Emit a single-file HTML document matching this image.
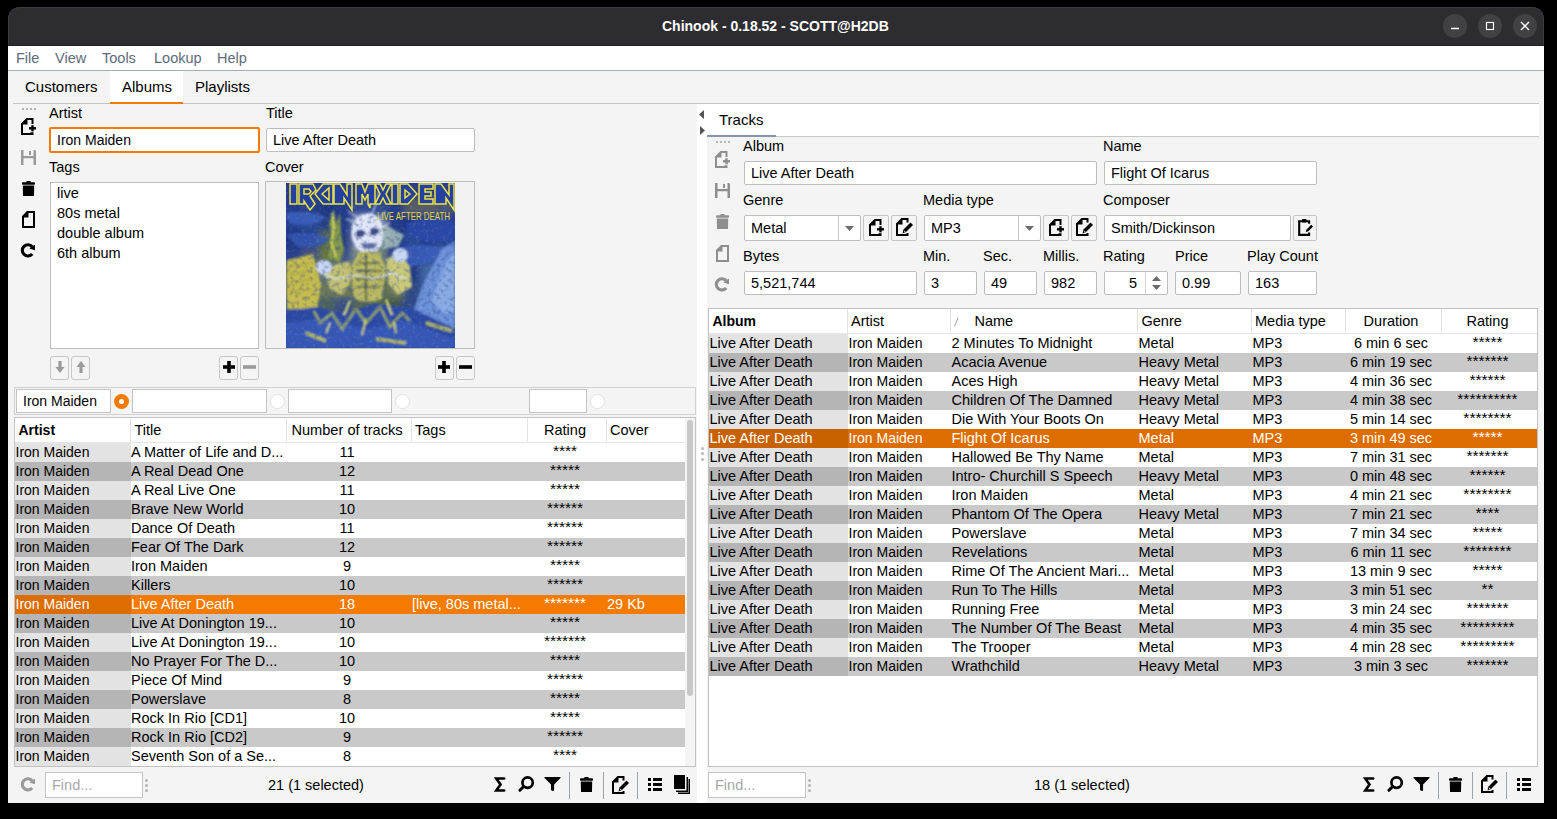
<!DOCTYPE html><html><head><meta charset="utf-8"><style>
html,body{margin:0;padding:0;width:1557px;height:819px;overflow:hidden;background:#000;font-family:"Liberation Sans", sans-serif;font-size:14px;color:#000}
*{box-sizing:border-box}
</style></head><body>
<div style="position:absolute;left:8px;top:40px;width:1536px;height:763px;background:#f4f4f4"></div>
<div style="position:absolute;left:8px;top:7px;width:1536px;height:39px;background:#2d2c31;border-radius:12px 12px 0 0;box-shadow:inset 0 0 0 1px #3c3c42"></div>
<div style="position:absolute;left:8px;top:45px;width:1536px;height:1px;background:#1f1f23"></div>
<div style="position:absolute;left:662px;top:16.15px;line-height:20px;font-size:14px;white-space:nowrap;color:#fff;font-weight:bold">Chinook - 0.18.52 - SCOTT@H2DB</div>
<div style="position:absolute;left:1443px;top:14px;width:24px;height:24px;background:#404045;border-radius:50%"></div>
<div style="position:absolute;left:1478px;top:14px;width:24px;height:24px;background:#404045;border-radius:50%"></div>
<div style="position:absolute;left:1513px;top:14px;width:24px;height:24px;background:#404045;border-radius:50%"></div>
<svg style="position:absolute;left:1440px;top:14px;overflow:visible" width="100" height="24" viewBox="0 0 100 24"><line x1="11" y1="14.5" x2="19" y2="14.5" stroke="#fff" stroke-width="1.5"/><rect x="46.5" y="8.5" width="7" height="7" fill="none" stroke="#fff" stroke-width="1.15"/><line x1="81" y1="8" x2="89" y2="16" stroke="#fff" stroke-width="1.4"/><line x1="89" y1="8" x2="81" y2="16" stroke="#fff" stroke-width="1.4"/></svg>
<div style="position:absolute;left:8px;top:46px;width:1536px;height:24px;background:#fff"></div>
<div style="position:absolute;left:8px;top:70px;width:1536px;height:1px;background:#a3adb8"></div>
<div style="position:absolute;left:16px;top:47.98px;line-height:20px;font-size:14.5px;white-space:nowrap;color:#5d6b7c">File</div>
<div style="position:absolute;left:55px;top:47.98px;line-height:20px;font-size:14.5px;white-space:nowrap;color:#5d6b7c">View</div>
<div style="position:absolute;left:102px;top:47.98px;line-height:20px;font-size:14.5px;white-space:nowrap;color:#5d6b7c">Tools</div>
<div style="position:absolute;left:154px;top:47.98px;line-height:20px;font-size:14.5px;white-space:nowrap;color:#5d6b7c">Lookup</div>
<div style="position:absolute;left:217px;top:47.98px;line-height:20px;font-size:14.5px;white-space:nowrap;color:#5d6b7c">Help</div>
<div style="position:absolute;left:110px;top:71px;width:73px;height:32px;background:#fff"></div>
<div style="position:absolute;left:13px;top:103px;width:1526px;height:1px;background:#c4c4c4"></div>
<div style="position:absolute;left:110px;top:102px;width:73px;height:2px;background:#f47a00"></div>
<div style="position:absolute;left:25px;top:76.80px;line-height:20px;font-size:15px;white-space:nowrap;">Customers</div>
<div style="position:absolute;left:122px;top:76.80px;line-height:20px;font-size:15px;white-space:nowrap;">Albums</div>
<div style="position:absolute;left:195px;top:76.80px;line-height:20px;font-size:15px;white-space:nowrap;">Playlists</div>
<div style="position:absolute;left:22px;top:108px;width:2px;height:2px;background:#b0b0b0"></div>
<div style="position:absolute;left:26px;top:108px;width:2px;height:2px;background:#b0b0b0"></div>
<div style="position:absolute;left:30px;top:108px;width:2px;height:2px;background:#b0b0b0"></div>
<div style="position:absolute;left:34px;top:108px;width:2px;height:2px;background:#b0b0b0"></div>
<svg style="position:absolute;left:21px;top:118px;overflow:visible" width="15" height="17" viewBox="0 0 15 17"><path fill="#000" d="M0,5.5 L5.5,0 H12.5 V6 H10.5 V2 H6.5 V6.5 H2 V15 H9.5 V14.2 H12.5 V17 H0 Z"/><rect x="10.3" y="7.2" width="2.4" height="6.2" fill="#000"/><rect x="8" y="9.1" width="7" height="2.4" fill="#000"/></svg>
<svg style="position:absolute;left:21px;top:150px;overflow:visible" width="15" height="15" viewBox="0 0 15 15"><path fill="#9a9a9a" d="M0,0 H2.5 V6 H12.5 V0 H14 L15,1 V15 H12.5 V8.2 H2.5 V15 H0 Z"/><rect x="8" y="1" width="2" height="4" fill="#9a9a9a"/></svg>
<svg style="position:absolute;left:22px;top:181px;overflow:visible" width="13" height="15" viewBox="0 0 13 15"><rect x="0" y="1.2" width="13" height="2.6" rx="0.8" fill="#000"/><rect x="4.2" y="0" width="4.6" height="2" rx="1" fill="#000"/><path fill="#000" d="M0.8,4.6 H12.2 L12,14.4 Q12,15 11.4,15 H1.6 Q1,15 1,14.4 Z"/></svg>
<svg style="position:absolute;left:22px;top:211px;overflow:visible" width="13" height="17" viewBox="0 0 13 17"><path fill="#000" fill-rule="evenodd" d="M0,5 L5,0 H13 V17 H0 Z M2,6.5 H6.5 V2 H11 V15 H2 Z"/></svg>
<svg style="position:absolute;left:21px;top:243px;overflow:visible" width="16" height="16" viewBox="0 0 16 16"><path fill="none" stroke="#000" stroke-width="3.1" d="M11.2,11.0 A5.6,5.6 0 1 1 11.2,3.8"/><path fill="#000" d="M8.3,5.4 L14,1.5 L14,7.3 Z"/></svg>
<div style="position:absolute;left:49px;top:102.98px;line-height:20px;font-size:14.5px;white-space:nowrap;">Artist</div>
<div style="position:absolute;left:49px;top:127px;width:211px;height:26px;background:#fff;border:2px solid #f47a00;border-radius:2px"></div>
<div style="position:absolute;left:57px;top:130.15px;line-height:20px;font-size:14px;white-space:nowrap;">Iron Maiden</div>
<div style="position:absolute;left:266px;top:102.98px;line-height:20px;font-size:14.5px;white-space:nowrap;">Title</div>
<div style="position:absolute;left:266px;top:128px;width:209px;height:24px;background:#fff;border:1px solid #bdbdbd;border-radius:2px"></div>
<div style="position:absolute;left:273px;top:129.98px;line-height:20px;font-size:14.5px;white-space:nowrap;">Live After Death</div>
<div style="position:absolute;left:49px;top:156.98px;line-height:20px;font-size:14.5px;white-space:nowrap;">Tags</div>
<div style="position:absolute;left:50px;top:182px;width:209px;height:167px;background:#fff;border:1px solid #bdbdbd;border-radius:0px"></div>
<div style="position:absolute;left:57px;top:182.98px;line-height:20px;font-size:14.5px;white-space:nowrap;">live</div>
<div style="position:absolute;left:57px;top:202.98px;line-height:20px;font-size:14.5px;white-space:nowrap;">80s metal</div>
<div style="position:absolute;left:57px;top:222.98px;line-height:20px;font-size:14.5px;white-space:nowrap;">double album</div>
<div style="position:absolute;left:57px;top:242.98px;line-height:20px;font-size:14.5px;white-space:nowrap;">6th album</div>
<div style="position:absolute;left:265px;top:156.98px;line-height:20px;font-size:14.5px;white-space:nowrap;">Cover</div>
<div style="position:absolute;left:265px;top:181px;width:210px;height:168px;background:#f2f2f2;border:1px solid #bdbdbd;border-radius:0px"></div>
<svg style="position:absolute;left:286px;top:183px" width="169" height="165" viewBox="0 0 169 165">
<defs>
<clipPath id="cc"><rect width="169" height="165"/></clipPath>
<filter id="bl" x="-10%" y="-10%" width="120%" height="120%"><feGaussianBlur stdDeviation="3"/></filter>
<filter id="bl2" x="-20%" y="-20%" width="140%" height="140%"><feGaussianBlur stdDeviation="1.0"/></filter>
<filter id="tx" x="0" y="0" width="100%" height="100%"><feTurbulence type="fractalNoise" baseFrequency="0.22" numOctaves="2" seed="3"/><feColorMatrix type="matrix" values="0 0 0 0 0.05  0 0 0 0 0.08  0 0 0 0 0.3  0 0 0 -2.0 1.05"/></filter>
<filter id="tx3" x="0" y="0" width="100%" height="100%"><feTurbulence type="fractalNoise" baseFrequency="0.3" numOctaves="2" seed="7"/><feColorMatrix type="matrix" values="0 0 0 0 0.9  0 0 0 0 0.95  0 0 0 0 1  0 0 0 2.6 -1.45"/></filter>
</defs>
<g clip-path="url(#cc)">
<rect width="169" height="165" fill="#22389a"/>
<g filter="url(#bl)"><rect x="-1.0" y="-1.0" width="18.9" height="18.5" fill="#2f3c76"/><rect x="15.9" y="-1.0" width="18.9" height="18.5" fill="#2f3c7c"/><rect x="32.8" y="-1.0" width="18.9" height="18.5" fill="#253783"/><rect x="49.7" y="-1.0" width="18.9" height="18.5" fill="#2f3c7c"/><rect x="66.6" y="-1.0" width="18.9" height="18.5" fill="#253783"/><rect x="83.5" y="-1.0" width="18.9" height="18.5" fill="#2f3c76"/><rect x="100.4" y="-1.0" width="18.9" height="18.5" fill="#2f3c7c"/><rect x="117.3" y="-1.0" width="18.9" height="18.5" fill="#2f3c7c"/><rect x="134.2" y="-1.0" width="18.9" height="18.5" fill="#2f3c7c"/><rect x="151.1" y="-1.0" width="18.9" height="18.5" fill="#2f3c7c"/><rect x="-1.0" y="15.5" width="18.9" height="18.5" fill="#203b89"/><rect x="15.9" y="15.5" width="18.9" height="18.5" fill="#274189"/><rect x="32.8" y="15.5" width="18.9" height="18.5" fill="#1a3483"/><rect x="49.7" y="15.5" width="18.9" height="18.5" fill="#223b89"/><rect x="66.6" y="15.5" width="18.9" height="18.5" fill="#2d4896"/><rect x="83.5" y="15.5" width="18.9" height="18.5" fill="#2d4890"/><rect x="100.4" y="15.5" width="18.9" height="18.5" fill="#203b89"/><rect x="117.3" y="15.5" width="18.9" height="18.5" fill="#565b62"/><rect x="134.2" y="15.5" width="18.9" height="18.5" fill="#565b62"/><rect x="151.1" y="15.5" width="18.9" height="18.5" fill="#49556f"/><rect x="-1.0" y="32.0" width="18.9" height="18.5" fill="#204190"/><rect x="15.9" y="32.0" width="18.9" height="18.5" fill="#274896"/><rect x="32.8" y="32.0" width="18.9" height="18.5" fill="#274183"/><rect x="49.7" y="32.0" width="18.9" height="18.5" fill="#223c89"/><rect x="66.6" y="32.0" width="18.9" height="18.5" fill="#8396be"/><rect x="83.5" y="32.0" width="18.9" height="18.5" fill="#7689b1"/><rect x="100.4" y="32.0" width="18.9" height="18.5" fill="#223b89"/><rect x="117.3" y="32.0" width="18.9" height="18.5" fill="#1a3483"/><rect x="134.2" y="32.0" width="18.9" height="18.5" fill="#203b89"/><rect x="151.1" y="32.0" width="18.9" height="18.5" fill="#223b89"/><rect x="-1.0" y="48.5" width="18.9" height="18.5" fill="#1a3483"/><rect x="15.9" y="48.5" width="18.9" height="18.5" fill="#203b89"/><rect x="32.8" y="48.5" width="18.9" height="18.5" fill="#5b6f41"/><rect x="49.7" y="48.5" width="18.9" height="18.5" fill="#274183"/><rect x="66.6" y="48.5" width="18.9" height="18.5" fill="#96a4be"/><rect x="83.5" y="48.5" width="18.9" height="18.5" fill="#627c83"/><rect x="100.4" y="48.5" width="18.9" height="18.5" fill="#1a3483"/><rect x="117.3" y="48.5" width="18.9" height="18.5" fill="#274896"/><rect x="134.2" y="48.5" width="18.9" height="18.5" fill="#224190"/><rect x="151.1" y="48.5" width="18.9" height="18.5" fill="#204190"/><rect x="-1.0" y="65.0" width="18.9" height="18.5" fill="#274189"/><rect x="15.9" y="65.0" width="18.9" height="18.5" fill="#49557c"/><rect x="32.8" y="65.0" width="18.9" height="18.5" fill="#647641"/><rect x="49.7" y="65.0" width="18.9" height="18.5" fill="#3c5589"/><rect x="66.6" y="65.0" width="18.9" height="18.5" fill="#899683"/><rect x="83.5" y="65.0" width="18.9" height="18.5" fill="#768976"/><rect x="100.4" y="65.0" width="18.9" height="18.5" fill="#203b83"/><rect x="117.3" y="65.0" width="18.9" height="18.5" fill="#203b89"/><rect x="134.2" y="65.0" width="18.9" height="18.5" fill="#2f4e9d"/><rect x="151.1" y="65.0" width="18.9" height="18.5" fill="#4e6faa"/><rect x="-1.0" y="81.5" width="18.9" height="18.5" fill="#96903b"/><rect x="15.9" y="81.5" width="18.9" height="18.5" fill="#898341"/><rect x="32.8" y="81.5" width="18.9" height="18.5" fill="#556f83"/><rect x="49.7" y="81.5" width="18.9" height="18.5" fill="#83834e"/><rect x="66.6" y="81.5" width="18.9" height="18.5" fill="#5b6f76"/><rect x="83.5" y="81.5" width="18.9" height="18.5" fill="#5b6f5b"/><rect x="100.4" y="81.5" width="18.9" height="18.5" fill="#7c8962"/><rect x="117.3" y="81.5" width="18.9" height="18.5" fill="#223b83"/><rect x="134.2" y="81.5" width="18.9" height="18.5" fill="#4168a4"/><rect x="151.1" y="81.5" width="18.9" height="18.5" fill="#5576aa"/><rect x="-1.0" y="98.0" width="18.9" height="18.5" fill="#90893b"/><rect x="15.9" y="98.0" width="18.9" height="18.5" fill="#7c834e"/><rect x="32.8" y="98.0" width="18.9" height="18.5" fill="#68765b"/><rect x="49.7" y="98.0" width="18.9" height="18.5" fill="#717e4e"/><rect x="66.6" y="98.0" width="18.9" height="18.5" fill="#496276"/><rect x="83.5" y="98.0" width="18.9" height="18.5" fill="#4e6248"/><rect x="100.4" y="98.0" width="18.9" height="18.5" fill="#717e55"/><rect x="117.3" y="98.0" width="18.9" height="18.5" fill="#2f4883"/><rect x="134.2" y="98.0" width="18.9" height="18.5" fill="#345b9d"/><rect x="151.1" y="98.0" width="18.9" height="18.5" fill="#4e6faa"/><rect x="-1.0" y="114.5" width="18.9" height="18.5" fill="#415b89"/><rect x="15.9" y="114.5" width="18.9" height="18.5" fill="#4e6276"/><rect x="32.8" y="114.5" width="18.9" height="18.5" fill="#4e625b"/><rect x="49.7" y="114.5" width="18.9" height="18.5" fill="#344e83"/><rect x="66.6" y="114.5" width="18.9" height="18.5" fill="#56684e"/><rect x="83.5" y="114.5" width="18.9" height="18.5" fill="#5b6f41"/><rect x="100.4" y="114.5" width="18.9" height="18.5" fill="#41554e"/><rect x="117.3" y="114.5" width="18.9" height="18.5" fill="#2d4889"/><rect x="134.2" y="114.5" width="18.9" height="18.5" fill="#2f559d"/><rect x="151.1" y="114.5" width="18.9" height="18.5" fill="#4168a4"/><rect x="-1.0" y="131.0" width="18.9" height="18.5" fill="#274e90"/><rect x="15.9" y="131.0" width="18.9" height="18.5" fill="#3c5b83"/><rect x="32.8" y="131.0" width="18.9" height="18.5" fill="#5b6f4e"/><rect x="49.7" y="131.0" width="18.9" height="18.5" fill="#2d4890"/><rect x="66.6" y="131.0" width="18.9" height="18.5" fill="#415b83"/><rect x="83.5" y="131.0" width="18.9" height="18.5" fill="#344876"/><rect x="100.4" y="131.0" width="18.9" height="18.5" fill="#4e644e"/><rect x="117.3" y="131.0" width="18.9" height="18.5" fill="#274189"/><rect x="134.2" y="131.0" width="18.9" height="18.5" fill="#767141"/><rect x="151.1" y="131.0" width="18.9" height="18.5" fill="#64684e"/><rect x="-1.0" y="147.5" width="18.9" height="18.5" fill="#274890"/><rect x="15.9" y="147.5" width="18.9" height="18.5" fill="#274189"/><rect x="32.8" y="147.5" width="18.9" height="18.5" fill="#4e5b68"/><rect x="49.7" y="147.5" width="18.9" height="18.5" fill="#274189"/><rect x="66.6" y="147.5" width="18.9" height="18.5" fill="#4e6268"/><rect x="83.5" y="147.5" width="18.9" height="18.5" fill="#2d4889"/><rect x="100.4" y="147.5" width="18.9" height="18.5" fill="#274189"/><rect x="117.3" y="147.5" width="18.9" height="18.5" fill="#274189"/><rect x="134.2" y="147.5" width="18.9" height="18.5" fill="#274189"/><rect x="151.1" y="147.5" width="18.9" height="18.5" fill="#2d4890"/></g>
<g filter="url(#bl2)">
<path d="M0,30 Q20,26 40,34 Q30,44 10,42 Q0,40 0,30 Z" fill="#3c62c0" opacity="0.8"/>
<path d="M0,52 Q25,46 45,56 Q35,66 12,64 Z" fill="#3458b8" opacity="0.8"/>
<path d="M120,40 Q150,30 169,38 V58 Q145,62 122,52 Z" fill="#2a4aac" opacity="0.8"/>
<path d="M108,66 Q135,58 160,66 Q150,82 120,84 Z" fill="#3a62c4" opacity="0.7"/>
<path d="M169,58 L156,66 L146,84 L136,104 L128,126 L140,140 L169,150 Z" fill="#6a90d8"/>
<path d="M169,70 L160,80 L152,100 L146,118 L158,130 L169,128 Z" fill="#88aae4"/>
<path d="M1,77 L27,71 L35,102 L31,126 L1,126 Z" fill="#c4bc4c"/>
<path d="M4,84 L24,80 M4,92 L26,88 M4,100 L28,96 M4,108 L26,106" stroke="#9a9440" stroke-width="0.8" fill="none"/>
<path d="M42,74 L46,56 L43,40 L48,26 L50,40 L54,30 L55,52 L58,66 L54,80 Z" fill="#8aa040" opacity="0.9"/>
<path d="M46,30 L48,46 L45,60 L50,74" stroke="#e8e860" stroke-width="1.6" fill="none"/>
<path d="M66,44 Q70,30 84,30 Q96,34 98,46 Q100,62 88,70 Q76,72 70,64 Q64,56 66,44 Z" fill="#dfe6f8"/>
<path d="M96,40 L118,52 L112,64 L96,66 Z" fill="#a8c0b8" opacity="0.85"/>
<path d="M70,48 Q76,44 80,50 Q76,56 70,54 Z M84,46 Q90,42 94,48 Q90,54 84,52 Z" fill="#3a4a88"/>
<path d="M74,60 H92 L88,66 H78 Z" fill="#6070a8"/>
<path d="M72,70 Q82,66 94,70 L100,86 L96,116 Q82,122 68,116 L64,86 Z" fill="#b8b860"/>
<path d="M72,80 H94 M70,88 H96 M70,96 H96 M70,104 H94" stroke="#4a5a40" stroke-width="1.6" fill="none"/><path d="M80,70 V118" stroke="#4a5a40" stroke-width="2" fill="none"/>
<path d="M64,78 L48,82 L38,90 L44,106 L56,112 L64,100 Z" fill="#c0c070"/>
<path d="M100,76 L114,70 L124,84 L126,104 L112,112 L102,100 Z" fill="#c8c878"/>
<ellipse cx="38" cy="84" rx="8" ry="7" fill="#c8d8f4"/>
<ellipse cx="114" cy="72" rx="8" ry="7" fill="#c8d8f4"/>
<path d="M34,90 L50,96 L70,92 L88,96 L106,90 L120,96" stroke="#e8f0ff" stroke-width="1.2" fill="none"/>
<path d="M60,36 L72,40 M100,28 L90,38 M104,40 L94,44 M62,28 L74,36" stroke="#f0f4ff" stroke-width="1" fill="none"/>
<path d="M95,2 L90,22 L84,34" stroke="#c8d8ff" stroke-width="1.2" fill="none"/>
<path d="M0,128 L30,124 L60,130 L90,120 L128,126 L169,146 V165 H0 Z" fill="#2a4aa4"/><path d="M0,140 L40,136 L80,146 L120,138 L169,156 V165 H0 Z" fill="#3a5cbc" opacity="0.8"/>
<path d="M28,128 L34,140 L46,130 L56,146 L70,126 L80,140 L94,124 L104,144 L116,130 L124,138" stroke="#a8b848" stroke-width="2.4" fill="none" opacity="0.85"/><path d="M40,150 L44,140 M76,152 L80,136 M110,150 L108,138" stroke="#e0e070" stroke-width="1.6" fill="none"/>
<path d="M20,150 L40,158 M90,156 L120,160 M140,140 L166,148" stroke="#b8c048" stroke-width="3" fill="none"/>
<path d="M64,118 L58,132 M100,116 L106,132" stroke="#e8e870" stroke-width="2" fill="none"/>
</g>
<rect width="169" height="165" filter="url(#tx)" opacity="0.6"/>
<rect width="169" height="165" filter="url(#tx3)" opacity="0.15"/>
<path d="M4,1 H11 V21 H4 Z M13,1 H27 L30,7 L24,13 L29,21 L24,27 L18,18 V21 H13 Z M18,6 V11 H23 L25,8.5 L23,6 Z M29,11 L37,1 H47 L47,21 H37 Z M36,11 L43,5 V17 Z M48,1 H54 L61,12 V1 H66 V21 L66,27 L58,15 V21 H48 Z M70,1 H76 L79,9 L82,1 H89 V21 H84 V25 L82,21 V11 L79,17 L76,11 V21 H70 Z M89,1 H94 L97,7 L100,1 H105 L100,11 L105,21 H100 L97,15 L94,21 H89 L94,11 Z M106,1 H112 V21 H106 Z M114,1 H122 L131,11 L122,21 H114 Z M119,7 V15 L124,11 Z M133,1 H147 V6 H139 V9 H145 V13 H139 V16 H147 V21 H133 Z M149,1 H155 L163,12 V1 H168 V27 L160,15 V21 H149 Z" fill="#2440a0" fill-rule="evenodd" stroke="#e8e24a" stroke-width="1.5"/>
<text x="91" y="37" font-family="Liberation Sans" font-size="11" fill="#e0d840" textLength="73" lengthAdjust="spacingAndGlyphs">LIVE AFTER DEATH</text>
</g>
</svg>
<div style="position:absolute;left:50px;top:356px;width:19px;height:24px;background:#f4f4f4;border:1px solid #c8c8c8;border-radius:3px"></div>
<div style="position:absolute;left:71px;top:356px;width:19px;height:24px;background:#f4f4f4;border:1px solid #c8c8c8;border-radius:3px"></div>
<div style="position:absolute;left:219px;top:356px;width:19px;height:24px;background:#f4f4f4;border:1px solid #c8c8c8;border-radius:3px"></div>
<div style="position:absolute;left:240px;top:356px;width:19px;height:24px;background:#f4f4f4;border:1px solid #c8c8c8;border-radius:3px"></div>
<div style="position:absolute;left:435px;top:356px;width:19px;height:24px;background:#f4f4f4;border:1px solid #c8c8c8;border-radius:3px"></div>
<div style="position:absolute;left:456px;top:356px;width:19px;height:24px;background:#f4f4f4;border:1px solid #c8c8c8;border-radius:3px"></div>
<svg style="position:absolute;left:53.5px;top:361px;overflow:visible" width="12" height="13" viewBox="0 0 12 13"><path fill="#9a9a9a" d="M4.4,0 H7.6 V6 H10.5 L6,12 L1.5,6 H4.4 Z"/></svg>
<svg style="position:absolute;left:74.5px;top:361px;overflow:visible" width="12" height="13" viewBox="0 0 12 13"><path fill="#9a9a9a" d="M4.4,12 H7.6 V6 H10.5 L6,0 L1.5,6 H4.4 Z"/></svg>
<svg style="position:absolute;left:222.5px;top:361px;overflow:visible" width="12" height="12" viewBox="0 0 12 12"><rect x="4.2" y="0" width="3.6" height="12" fill="#000"/><rect x="0" y="4.2" width="12" height="3.6" fill="#000"/></svg>
<svg style="position:absolute;left:243.0px;top:361px;overflow:visible" width="13" height="12" viewBox="0 0 13 12"><rect x="0" y="4.2" width="13" height="3.6" fill="#9a9a9a"/></svg>
<svg style="position:absolute;left:438px;top:361px;overflow:visible" width="12" height="12" viewBox="0 0 12 12"><rect x="4.2" y="0" width="3.6" height="12" fill="#000"/><rect x="0" y="4.2" width="12" height="3.6" fill="#000"/></svg>
<svg style="position:absolute;left:459.0px;top:361px;overflow:visible" width="13" height="12" viewBox="0 0 13 12"><rect x="0" y="4.2" width="13" height="3.6" fill="#000"/></svg>
<div style="position:absolute;left:14px;top:387px;width:682px;height:28px;border:1px solid #d0d0d0;background:#f4f4f4"></div>
<div style="position:absolute;left:16px;top:389px;width:95px;height:24px;background:#fff;border:1px solid #c4c4c4;border-radius:0px"></div>
<div style="position:absolute;left:23px;top:391.15px;line-height:20px;font-size:14px;white-space:nowrap;">Iron Maiden</div>
<div style="position:absolute;left:114px;top:394px;width:15px;height:15px;background:#f47a00;border-radius:50%"></div>
<div style="position:absolute;left:119px;top:399px;width:5px;height:5px;background:#fff;border-radius:50%"></div>
<div style="position:absolute;left:132px;top:389px;width:135px;height:24px;background:#fff;border:1px solid #c4c4c4;border-radius:0px"></div>
<div style="position:absolute;left:270.0px;top:394px;width:15px;height:15px;background:#fff;border:1px solid #e2e2e2;border-radius:50%"></div>
<div style="position:absolute;left:395.0px;top:394px;width:15px;height:15px;background:#fff;border:1px solid #e2e2e2;border-radius:50%"></div>
<div style="position:absolute;left:590.0px;top:394px;width:15px;height:15px;background:#fff;border:1px solid #e2e2e2;border-radius:50%"></div>
<div style="position:absolute;left:288px;top:389px;width:104px;height:24px;background:#fff;border:1px solid #c4c4c4;border-radius:0px"></div>
<div style="position:absolute;left:529px;top:389px;width:58px;height:24px;background:#fff;border:1px solid #c4c4c4;border-radius:0px"></div>
<div style="position:absolute;left:14px;top:417px;width:682px;height:350px;border:1px solid #c2c2c2;background:#f4f4f4"></div>
<div style="position:absolute;left:15px;top:418px;width:670px;height:24px;background:#fff"></div>
<div style="position:absolute;left:15px;top:442px;width:670px;height:1px;background:#e6e6e6"></div>
<div style="position:absolute;left:130px;top:418px;width:1px;height:24px;background:#e3e3e3"></div>
<div style="position:absolute;left:286px;top:418px;width:1px;height:24px;background:#e3e3e3"></div>
<div style="position:absolute;left:411px;top:418px;width:1px;height:24px;background:#e3e3e3"></div>
<div style="position:absolute;left:527px;top:418px;width:1px;height:24px;background:#e3e3e3"></div>
<div style="position:absolute;left:606px;top:418px;width:1px;height:24px;background:#e3e3e3"></div>
<div style="position:absolute;left:18.5px;top:420.15px;line-height:20px;font-size:14px;white-space:nowrap;font-weight:bold">Artist</div>
<div style="position:absolute;left:134.5px;top:419.98px;line-height:20px;font-size:14.5px;white-space:nowrap;">Title</div>
<div style="position:absolute;left:197.0px;width:300px;text-align:center;top:419.94px;line-height:20px;font-size:14.6px;white-space:nowrap;">Number of tracks</div>
<div style="position:absolute;left:415px;top:419.98px;line-height:20px;font-size:14.5px;white-space:nowrap;">Tags</div>
<div style="position:absolute;left:415.0px;width:300px;text-align:center;top:419.98px;line-height:20px;font-size:14.5px;white-space:nowrap;">Rating</div>
<div style="position:absolute;left:610px;top:419.98px;line-height:20px;font-size:14.5px;white-space:nowrap;">Cover</div>
<div style="position:absolute;left:685px;top:418px;width:10px;height:348px;background:#f4f4f4"></div>
<div style="position:absolute;left:687px;top:420px;width:6px;height:276px;background:#c8c8c8;border-radius:3px"></div>
<div style="position:absolute;left:15px;top:443px;width:670px;height:19px;background:#ffffff"></div>
<div style="position:absolute;left:15px;top:443px;width:116px;height:19px;background:#e3e3e3"></div>
<div style="position:absolute;left:15.5px;top:442.15px;line-height:20px;font-size:14px;white-space:nowrap;color:#000">Iron Maiden</div>
<div style="position:absolute;left:131px;top:441.98px;line-height:20px;font-size:14.5px;white-space:nowrap;color:#000">A Matter of Life and D...</div>
<div style="position:absolute;left:197.0px;width:300px;text-align:center;top:441.98px;line-height:20px;font-size:14.5px;white-space:nowrap;color:#000">11</div>
<div style="position:absolute;left:415.0px;width:300px;text-align:center;top:440.63px;line-height:20px;font-size:15.5px;white-space:nowrap;color:#000">****</div>
<div style="position:absolute;left:15px;top:462px;width:670px;height:19px;background:#c9c9c9"></div>
<div style="position:absolute;left:15px;top:462px;width:116px;height:19px;background:#b5b5b5"></div>
<div style="position:absolute;left:15.5px;top:461.15px;line-height:20px;font-size:14px;white-space:nowrap;color:#000">Iron Maiden</div>
<div style="position:absolute;left:131px;top:460.98px;line-height:20px;font-size:14.5px;white-space:nowrap;color:#000">A Real Dead One</div>
<div style="position:absolute;left:197.0px;width:300px;text-align:center;top:460.98px;line-height:20px;font-size:14.5px;white-space:nowrap;color:#000">12</div>
<div style="position:absolute;left:415.0px;width:300px;text-align:center;top:459.63px;line-height:20px;font-size:15.5px;white-space:nowrap;color:#000">*****</div>
<div style="position:absolute;left:15px;top:481px;width:670px;height:19px;background:#ffffff"></div>
<div style="position:absolute;left:15px;top:481px;width:116px;height:19px;background:#e3e3e3"></div>
<div style="position:absolute;left:15.5px;top:480.15px;line-height:20px;font-size:14px;white-space:nowrap;color:#000">Iron Maiden</div>
<div style="position:absolute;left:131px;top:479.98px;line-height:20px;font-size:14.5px;white-space:nowrap;color:#000">A Real Live One</div>
<div style="position:absolute;left:197.0px;width:300px;text-align:center;top:479.98px;line-height:20px;font-size:14.5px;white-space:nowrap;color:#000">11</div>
<div style="position:absolute;left:415.0px;width:300px;text-align:center;top:478.63px;line-height:20px;font-size:15.5px;white-space:nowrap;color:#000">*****</div>
<div style="position:absolute;left:15px;top:500px;width:670px;height:19px;background:#c9c9c9"></div>
<div style="position:absolute;left:15px;top:500px;width:116px;height:19px;background:#b5b5b5"></div>
<div style="position:absolute;left:15.5px;top:499.15px;line-height:20px;font-size:14px;white-space:nowrap;color:#000">Iron Maiden</div>
<div style="position:absolute;left:131px;top:498.98px;line-height:20px;font-size:14.5px;white-space:nowrap;color:#000">Brave New World</div>
<div style="position:absolute;left:197.0px;width:300px;text-align:center;top:498.98px;line-height:20px;font-size:14.5px;white-space:nowrap;color:#000">10</div>
<div style="position:absolute;left:415.0px;width:300px;text-align:center;top:497.63px;line-height:20px;font-size:15.5px;white-space:nowrap;color:#000">******</div>
<div style="position:absolute;left:15px;top:519px;width:670px;height:19px;background:#ffffff"></div>
<div style="position:absolute;left:15px;top:519px;width:116px;height:19px;background:#e3e3e3"></div>
<div style="position:absolute;left:15.5px;top:518.15px;line-height:20px;font-size:14px;white-space:nowrap;color:#000">Iron Maiden</div>
<div style="position:absolute;left:131px;top:517.98px;line-height:20px;font-size:14.5px;white-space:nowrap;color:#000">Dance Of Death</div>
<div style="position:absolute;left:197.0px;width:300px;text-align:center;top:517.98px;line-height:20px;font-size:14.5px;white-space:nowrap;color:#000">11</div>
<div style="position:absolute;left:415.0px;width:300px;text-align:center;top:516.63px;line-height:20px;font-size:15.5px;white-space:nowrap;color:#000">******</div>
<div style="position:absolute;left:15px;top:538px;width:670px;height:19px;background:#c9c9c9"></div>
<div style="position:absolute;left:15px;top:538px;width:116px;height:19px;background:#b5b5b5"></div>
<div style="position:absolute;left:15.5px;top:537.15px;line-height:20px;font-size:14px;white-space:nowrap;color:#000">Iron Maiden</div>
<div style="position:absolute;left:131px;top:536.98px;line-height:20px;font-size:14.5px;white-space:nowrap;color:#000">Fear Of The Dark</div>
<div style="position:absolute;left:197.0px;width:300px;text-align:center;top:536.98px;line-height:20px;font-size:14.5px;white-space:nowrap;color:#000">12</div>
<div style="position:absolute;left:415.0px;width:300px;text-align:center;top:535.63px;line-height:20px;font-size:15.5px;white-space:nowrap;color:#000">******</div>
<div style="position:absolute;left:15px;top:557px;width:670px;height:19px;background:#ffffff"></div>
<div style="position:absolute;left:15px;top:557px;width:116px;height:19px;background:#e3e3e3"></div>
<div style="position:absolute;left:15.5px;top:556.15px;line-height:20px;font-size:14px;white-space:nowrap;color:#000">Iron Maiden</div>
<div style="position:absolute;left:131px;top:555.98px;line-height:20px;font-size:14.5px;white-space:nowrap;color:#000">Iron Maiden</div>
<div style="position:absolute;left:197.0px;width:300px;text-align:center;top:555.98px;line-height:20px;font-size:14.5px;white-space:nowrap;color:#000">9</div>
<div style="position:absolute;left:415.0px;width:300px;text-align:center;top:554.63px;line-height:20px;font-size:15.5px;white-space:nowrap;color:#000">*****</div>
<div style="position:absolute;left:15px;top:576px;width:670px;height:19px;background:#c9c9c9"></div>
<div style="position:absolute;left:15px;top:576px;width:116px;height:19px;background:#b5b5b5"></div>
<div style="position:absolute;left:15.5px;top:575.15px;line-height:20px;font-size:14px;white-space:nowrap;color:#000">Iron Maiden</div>
<div style="position:absolute;left:131px;top:574.98px;line-height:20px;font-size:14.5px;white-space:nowrap;color:#000">Killers</div>
<div style="position:absolute;left:197.0px;width:300px;text-align:center;top:574.98px;line-height:20px;font-size:14.5px;white-space:nowrap;color:#000">10</div>
<div style="position:absolute;left:415.0px;width:300px;text-align:center;top:573.63px;line-height:20px;font-size:15.5px;white-space:nowrap;color:#000">******</div>
<div style="position:absolute;left:15px;top:595px;width:670px;height:19px;background:#f47a00"></div>
<div style="position:absolute;left:15px;top:595px;width:116px;height:19px;background:#dc6d00"></div>
<div style="position:absolute;left:15.5px;top:594.15px;line-height:20px;font-size:14px;white-space:nowrap;color:#fff">Iron Maiden</div>
<div style="position:absolute;left:131px;top:593.98px;line-height:20px;font-size:14.5px;white-space:nowrap;color:#fff">Live After Death</div>
<div style="position:absolute;left:197.0px;width:300px;text-align:center;top:593.98px;line-height:20px;font-size:14.5px;white-space:nowrap;color:#fff">18</div>
<div style="position:absolute;left:415.0px;width:300px;text-align:center;top:592.63px;line-height:20px;font-size:15.5px;white-space:nowrap;color:#fff">*******</div>
<div style="position:absolute;left:412px;top:593.98px;line-height:20px;font-size:14.5px;white-space:nowrap;color:#fff">[live, 80s metal...</div>
<div style="position:absolute;left:607px;top:593.98px;line-height:20px;font-size:14.5px;white-space:nowrap;color:#fff">29 Kb</div>
<div style="position:absolute;left:15px;top:614px;width:670px;height:19px;background:#c9c9c9"></div>
<div style="position:absolute;left:15px;top:614px;width:116px;height:19px;background:#b5b5b5"></div>
<div style="position:absolute;left:15.5px;top:613.15px;line-height:20px;font-size:14px;white-space:nowrap;color:#000">Iron Maiden</div>
<div style="position:absolute;left:131px;top:612.98px;line-height:20px;font-size:14.5px;white-space:nowrap;color:#000">Live At Donington 19...</div>
<div style="position:absolute;left:197.0px;width:300px;text-align:center;top:612.98px;line-height:20px;font-size:14.5px;white-space:nowrap;color:#000">10</div>
<div style="position:absolute;left:415.0px;width:300px;text-align:center;top:611.63px;line-height:20px;font-size:15.5px;white-space:nowrap;color:#000">*****</div>
<div style="position:absolute;left:15px;top:633px;width:670px;height:19px;background:#ffffff"></div>
<div style="position:absolute;left:15px;top:633px;width:116px;height:19px;background:#e3e3e3"></div>
<div style="position:absolute;left:15.5px;top:632.15px;line-height:20px;font-size:14px;white-space:nowrap;color:#000">Iron Maiden</div>
<div style="position:absolute;left:131px;top:631.98px;line-height:20px;font-size:14.5px;white-space:nowrap;color:#000">Live At Donington 19...</div>
<div style="position:absolute;left:197.0px;width:300px;text-align:center;top:631.98px;line-height:20px;font-size:14.5px;white-space:nowrap;color:#000">10</div>
<div style="position:absolute;left:415.0px;width:300px;text-align:center;top:630.63px;line-height:20px;font-size:15.5px;white-space:nowrap;color:#000">*******</div>
<div style="position:absolute;left:15px;top:652px;width:670px;height:19px;background:#c9c9c9"></div>
<div style="position:absolute;left:15px;top:652px;width:116px;height:19px;background:#b5b5b5"></div>
<div style="position:absolute;left:15.5px;top:651.15px;line-height:20px;font-size:14px;white-space:nowrap;color:#000">Iron Maiden</div>
<div style="position:absolute;left:131px;top:650.98px;line-height:20px;font-size:14.5px;white-space:nowrap;color:#000">No Prayer For The D...</div>
<div style="position:absolute;left:197.0px;width:300px;text-align:center;top:650.98px;line-height:20px;font-size:14.5px;white-space:nowrap;color:#000">10</div>
<div style="position:absolute;left:415.0px;width:300px;text-align:center;top:649.63px;line-height:20px;font-size:15.5px;white-space:nowrap;color:#000">*****</div>
<div style="position:absolute;left:15px;top:671px;width:670px;height:19px;background:#ffffff"></div>
<div style="position:absolute;left:15px;top:671px;width:116px;height:19px;background:#e3e3e3"></div>
<div style="position:absolute;left:15.5px;top:670.15px;line-height:20px;font-size:14px;white-space:nowrap;color:#000">Iron Maiden</div>
<div style="position:absolute;left:131px;top:669.98px;line-height:20px;font-size:14.5px;white-space:nowrap;color:#000">Piece Of Mind</div>
<div style="position:absolute;left:197.0px;width:300px;text-align:center;top:669.98px;line-height:20px;font-size:14.5px;white-space:nowrap;color:#000">9</div>
<div style="position:absolute;left:415.0px;width:300px;text-align:center;top:668.63px;line-height:20px;font-size:15.5px;white-space:nowrap;color:#000">******</div>
<div style="position:absolute;left:15px;top:690px;width:670px;height:19px;background:#c9c9c9"></div>
<div style="position:absolute;left:15px;top:690px;width:116px;height:19px;background:#b5b5b5"></div>
<div style="position:absolute;left:15.5px;top:689.15px;line-height:20px;font-size:14px;white-space:nowrap;color:#000">Iron Maiden</div>
<div style="position:absolute;left:131px;top:688.98px;line-height:20px;font-size:14.5px;white-space:nowrap;color:#000">Powerslave</div>
<div style="position:absolute;left:197.0px;width:300px;text-align:center;top:688.98px;line-height:20px;font-size:14.5px;white-space:nowrap;color:#000">8</div>
<div style="position:absolute;left:415.0px;width:300px;text-align:center;top:687.63px;line-height:20px;font-size:15.5px;white-space:nowrap;color:#000">*****</div>
<div style="position:absolute;left:15px;top:709px;width:670px;height:19px;background:#ffffff"></div>
<div style="position:absolute;left:15px;top:709px;width:116px;height:19px;background:#e3e3e3"></div>
<div style="position:absolute;left:15.5px;top:708.15px;line-height:20px;font-size:14px;white-space:nowrap;color:#000">Iron Maiden</div>
<div style="position:absolute;left:131px;top:707.98px;line-height:20px;font-size:14.5px;white-space:nowrap;color:#000">Rock In Rio [CD1]</div>
<div style="position:absolute;left:197.0px;width:300px;text-align:center;top:707.98px;line-height:20px;font-size:14.5px;white-space:nowrap;color:#000">10</div>
<div style="position:absolute;left:415.0px;width:300px;text-align:center;top:706.63px;line-height:20px;font-size:15.5px;white-space:nowrap;color:#000">*****</div>
<div style="position:absolute;left:15px;top:728px;width:670px;height:19px;background:#c9c9c9"></div>
<div style="position:absolute;left:15px;top:728px;width:116px;height:19px;background:#b5b5b5"></div>
<div style="position:absolute;left:15.5px;top:727.15px;line-height:20px;font-size:14px;white-space:nowrap;color:#000">Iron Maiden</div>
<div style="position:absolute;left:131px;top:726.98px;line-height:20px;font-size:14.5px;white-space:nowrap;color:#000">Rock In Rio [CD2]</div>
<div style="position:absolute;left:197.0px;width:300px;text-align:center;top:726.98px;line-height:20px;font-size:14.5px;white-space:nowrap;color:#000">9</div>
<div style="position:absolute;left:415.0px;width:300px;text-align:center;top:725.63px;line-height:20px;font-size:15.5px;white-space:nowrap;color:#000">******</div>
<div style="position:absolute;left:15px;top:747px;width:670px;height:19px;background:#ffffff"></div>
<div style="position:absolute;left:15px;top:747px;width:116px;height:19px;background:#e3e3e3"></div>
<div style="position:absolute;left:15.5px;top:746.15px;line-height:20px;font-size:14px;white-space:nowrap;color:#000">Iron Maiden</div>
<div style="position:absolute;left:131px;top:745.98px;line-height:20px;font-size:14.5px;white-space:nowrap;color:#000">Seventh Son of a Se...</div>
<div style="position:absolute;left:197.0px;width:300px;text-align:center;top:745.98px;line-height:20px;font-size:14.5px;white-space:nowrap;color:#000">8</div>
<div style="position:absolute;left:415.0px;width:300px;text-align:center;top:744.63px;line-height:20px;font-size:15.5px;white-space:nowrap;color:#000">****</div>
<svg style="position:absolute;left:21px;top:777px;overflow:visible" width="16" height="16" viewBox="0 0 16 16"><path fill="none" stroke="#9a9a9a" stroke-width="3.1" d="M11.2,11.0 A5.6,5.6 0 1 1 11.2,3.8"/><path fill="#9a9a9a" d="M8.3,5.4 L14,1.5 L14,7.3 Z"/></svg>
<div style="position:absolute;left:45px;top:772px;width:98px;height:26px;background:#fff;border:1px solid #c4c4c4;border-radius:0px"></div>
<div style="position:absolute;left:52px;top:774.98px;line-height:20px;font-size:14.5px;white-space:nowrap;color:#a8a8a8">Find...</div>
<div style="position:absolute;left:145px;top:778.5px;width:3px;height:3px;background:#b4b4b4;border-radius:50%"></div>
<div style="position:absolute;left:145px;top:783.5px;width:3px;height:3px;background:#b4b4b4;border-radius:50%"></div>
<div style="position:absolute;left:145px;top:788.5px;width:3px;height:3px;background:#b4b4b4;border-radius:50%"></div>
<div style="position:absolute;left:268px;top:774.98px;line-height:20px;font-size:14.5px;white-space:nowrap;">21 (1 selected)</div>
<svg style="position:absolute;left:494px;top:777px;overflow:visible" width="11" height="15" viewBox="0 0 11 15"><path fill="none" stroke="#000" stroke-width="2.6" stroke-linejoin="miter" stroke-linecap="round" d="M10.2,1.5 H2.3 L6.5,7.5 L2.3,13.5 H10.2"/></svg>
<svg style="position:absolute;left:518px;top:776px;overflow:visible" width="16" height="16" viewBox="0 0 16 16"><circle cx="9.6" cy="6.6" r="5.2" fill="none" stroke="#000" stroke-width="2.7"/><line x1="5.4" y1="10.8" x2="1.9" y2="14.3" stroke="#000" stroke-width="3" stroke-linecap="round"/></svg>
<svg style="position:absolute;left:544px;top:777px;overflow:visible" width="17" height="14" viewBox="0 0 17 14"><path fill="#000" d="M0.3,0.8 Q0.3,0 1.1,0 H15.9 Q16.7,0 16.7,0.8 L10.1,7.6 V13 Q10.1,14 9.1,14 Q7,13.6 7,12.5 V7.6 Z"/></svg>
<div style="position:absolute;left:569px;top:772px;width:1px;height:27px;background:#9aa3ad"></div>
<svg style="position:absolute;left:580px;top:777px;overflow:visible" width="13" height="15" viewBox="0 0 13 15"><rect x="0" y="1.2" width="13" height="2.6" rx="0.8" fill="#000"/><rect x="4.2" y="0" width="4.6" height="2" rx="1" fill="#000"/><path fill="#000" d="M0.8,4.6 H12.2 L12,14.4 Q12,15 11.4,15 H1.6 Q1,15 1,14.4 Z"/></svg>
<div style="position:absolute;left:603px;top:772px;width:1px;height:27px;background:#9aa3ad"></div>
<svg style="position:absolute;left:612px;top:775.5px;overflow:visible" width="17" height="18" viewBox="0 0 17 18"><path fill="#000" d="M0,5.5 L5.5,0 H12.5 V4.5 H10.5 V2 H6.5 V6.5 H2 V16 H10.5 V15 H12.5 V18 H0 Z"/><path fill="#000" d="M6.5,15.5 L7.5,11.5 L14.5,4.5 L17,7 L10,14 Z"/><path fill="#f4f4f4" d="M8,14.2 L8.5,12.6 L9.6,13.7 Z"/></svg>
<div style="position:absolute;left:637px;top:772px;width:1px;height:27px;background:#9aa3ad"></div>
<svg style="position:absolute;left:648px;top:778px;overflow:visible" width="14" height="13" viewBox="0 0 14 13"><rect x="0" y="0" width="3" height="3" fill="#000"/><rect x="5" y="0" width="9" height="3" fill="#000"/><rect x="0" y="5" width="3" height="3" fill="#000"/><rect x="5" y="5" width="9" height="3" fill="#000"/><rect x="0" y="10" width="3" height="3" fill="#000"/><rect x="5" y="10" width="9" height="3" fill="#000"/></svg>
<svg style="position:absolute;left:674px;top:775px;overflow:visible" width="16" height="20" viewBox="0 0 16 20"><rect x="4" y="4" width="12" height="15" fill="#000"/><rect x="3" y="3" width="11.5" height="14.5" fill="#f4f4f4"/><rect x="2" y="2" width="12" height="15" fill="#000"/><rect x="1" y="1" width="11.5" height="14.5" fill="#f4f4f4"/><rect x="0" y="0" width="11" height="14" rx="0.5" fill="#000"/></svg>
<div style="position:absolute;left:697px;top:104px;width:10px;height:699px;background:#fff"></div>
<div style="position:absolute;left:697px;top:104px;width:842px;height:32px;background:#fff"></div>
<div style="position:absolute;left:707px;top:136px;width:832px;height:1px;background:#c8c8c8"></div>
<div style="position:absolute;left:707px;top:135px;width:69px;height:2px;background:#8595ad"></div>
<svg style="position:absolute;left:698px;top:109px;overflow:visible" width="8" height="28" viewBox="0 0 8 28"><path fill="#555" d="M6,1 V10 L1,5.5 Z"/><path fill="#555" d="M2,17 V26 L7,21.5 Z"/></svg>
<div style="position:absolute;left:719px;top:109.80px;line-height:20px;font-size:15px;white-space:nowrap;">Tracks</div>
<div style="position:absolute;left:716px;top:141px;width:2px;height:2px;background:#b8b8b8"></div>
<div style="position:absolute;left:720px;top:141px;width:2px;height:2px;background:#b8b8b8"></div>
<div style="position:absolute;left:724px;top:141px;width:2px;height:2px;background:#b8b8b8"></div>
<div style="position:absolute;left:728px;top:141px;width:2px;height:2px;background:#b8b8b8"></div>
<svg style="position:absolute;left:715px;top:151px;overflow:visible" width="15" height="17" viewBox="0 0 15 17"><path fill="#8e8e8e" d="M0,5.5 L5.5,0 H12.5 V6 H10.5 V2 H6.5 V6.5 H2 V15 H9.5 V14.2 H12.5 V17 H0 Z"/><rect x="10.3" y="7.2" width="2.4" height="6.2" fill="#8e8e8e"/><rect x="8" y="9.1" width="7" height="2.4" fill="#8e8e8e"/></svg>
<svg style="position:absolute;left:715px;top:183px;overflow:visible" width="15" height="15" viewBox="0 0 15 15"><path fill="#8e8e8e" d="M0,0 H2.5 V6 H12.5 V0 H14 L15,1 V15 H12.5 V8.2 H2.5 V15 H0 Z"/><rect x="8" y="1" width="2" height="4" fill="#8e8e8e"/></svg>
<svg style="position:absolute;left:716px;top:214px;overflow:visible" width="13" height="15" viewBox="0 0 13 15"><rect x="0" y="1.2" width="13" height="2.6" rx="0.8" fill="#8e8e8e"/><rect x="4.2" y="0" width="4.6" height="2" rx="1" fill="#8e8e8e"/><path fill="#8e8e8e" d="M0.8,4.6 H12.2 L12,14.4 Q12,15 11.4,15 H1.6 Q1,15 1,14.4 Z"/></svg>
<svg style="position:absolute;left:716px;top:245px;overflow:visible" width="13" height="17" viewBox="0 0 13 17"><path fill="#8e8e8e" fill-rule="evenodd" d="M0,5 L5,0 H13 V17 H0 Z M2,6.5 H6.5 V2 H11 V15 H2 Z"/></svg>
<svg style="position:absolute;left:715px;top:277px;overflow:visible" width="16" height="16" viewBox="0 0 16 16"><path fill="none" stroke="#8e8e8e" stroke-width="3.1" d="M11.2,11.0 A5.6,5.6 0 1 1 11.2,3.8"/><path fill="#8e8e8e" d="M8.3,5.4 L14,1.5 L14,7.3 Z"/></svg>
<div style="position:absolute;left:743px;top:135.98px;line-height:20px;font-size:14.5px;white-space:nowrap;">Album</div>
<div style="position:absolute;left:744px;top:161px;width:353px;height:24px;background:#fff;border:1px solid #bdbdbd;border-radius:2px"></div>
<div style="position:absolute;left:751px;top:162.98px;line-height:20px;font-size:14.5px;white-space:nowrap;">Live After Death</div>
<div style="position:absolute;left:1103px;top:135.98px;line-height:20px;font-size:14.5px;white-space:nowrap;">Name</div>
<div style="position:absolute;left:1104px;top:161px;width:213px;height:24px;background:#fff;border:1px solid #bdbdbd;border-radius:2px"></div>
<div style="position:absolute;left:1111px;top:162.98px;line-height:20px;font-size:14.5px;white-space:nowrap;">Flight Of Icarus</div>
<div style="position:absolute;left:743px;top:189.98px;line-height:20px;font-size:14.5px;white-space:nowrap;">Genre</div>
<div style="position:absolute;left:744px;top:215px;width:117px;height:26px;background:#fff;border:1px solid #bdbdbd;border-radius:2px"></div>
<div style="position:absolute;left:838px;top:216px;width:1px;height:24px;background:#c8c8c8"></div>
<svg style="position:absolute;left:845.0px;top:226px;overflow:visible" width="9" height="5" viewBox="0 0 9 5"><path fill="#6b6b6b" d="M0,0 H9 L4.5,5 Z"/></svg>
<div style="position:absolute;left:751px;top:217.98px;line-height:20px;font-size:14.5px;white-space:nowrap;">Metal</div>
<div style="position:absolute;left:863px;top:215px;width:26px;height:26px;background:#f4f4f4;border:1px solid #c4c4c4;border-radius:2px"></div>
<svg style="position:absolute;left:868.5px;top:218.5px;overflow:visible" width="15" height="17" viewBox="0 0 15 17"><path fill="#000" d="M0,5.5 L5.5,0 H12.5 V6 H10.5 V2 H6.5 V6.5 H2 V15 H9.5 V14.2 H12.5 V17 H0 Z"/><rect x="10.3" y="7.2" width="2.4" height="6.2" fill="#000"/><rect x="8" y="9.1" width="7" height="2.4" fill="#000"/></svg>
<div style="position:absolute;left:891px;top:215px;width:26px;height:26px;background:#f4f4f4;border:1px solid #c4c4c4;border-radius:2px"></div>
<svg style="position:absolute;left:895.5px;top:218.0px;overflow:visible" width="17" height="18" viewBox="0 0 17 18"><path fill="#000" d="M0,5.5 L5.5,0 H12.5 V4.5 H10.5 V2 H6.5 V6.5 H2 V16 H10.5 V15 H12.5 V18 H0 Z"/><path fill="#000" d="M6.5,15.5 L7.5,11.5 L14.5,4.5 L17,7 L10,14 Z"/><path fill="#f4f4f4" d="M8,14.2 L8.5,12.6 L9.6,13.7 Z"/></svg>
<div style="position:absolute;left:923px;top:189.98px;line-height:20px;font-size:14.5px;white-space:nowrap;">Media type</div>
<div style="position:absolute;left:924px;top:215px;width:117px;height:26px;background:#fff;border:1px solid #bdbdbd;border-radius:2px"></div>
<div style="position:absolute;left:1018px;top:216px;width:1px;height:24px;background:#c8c8c8"></div>
<svg style="position:absolute;left:1025.0px;top:226px;overflow:visible" width="9" height="5" viewBox="0 0 9 5"><path fill="#6b6b6b" d="M0,0 H9 L4.5,5 Z"/></svg>
<div style="position:absolute;left:931px;top:217.98px;line-height:20px;font-size:14.5px;white-space:nowrap;">MP3</div>
<div style="position:absolute;left:1043px;top:215px;width:26px;height:26px;background:#f4f4f4;border:1px solid #c4c4c4;border-radius:2px"></div>
<svg style="position:absolute;left:1048.5px;top:218.5px;overflow:visible" width="15" height="17" viewBox="0 0 15 17"><path fill="#000" d="M0,5.5 L5.5,0 H12.5 V6 H10.5 V2 H6.5 V6.5 H2 V15 H9.5 V14.2 H12.5 V17 H0 Z"/><rect x="10.3" y="7.2" width="2.4" height="6.2" fill="#000"/><rect x="8" y="9.1" width="7" height="2.4" fill="#000"/></svg>
<div style="position:absolute;left:1071px;top:215px;width:26px;height:26px;background:#f4f4f4;border:1px solid #c4c4c4;border-radius:2px"></div>
<svg style="position:absolute;left:1075.5px;top:218.0px;overflow:visible" width="17" height="18" viewBox="0 0 17 18"><path fill="#000" d="M0,5.5 L5.5,0 H12.5 V4.5 H10.5 V2 H6.5 V6.5 H2 V16 H10.5 V15 H12.5 V18 H0 Z"/><path fill="#000" d="M6.5,15.5 L7.5,11.5 L14.5,4.5 L17,7 L10,14 Z"/><path fill="#f4f4f4" d="M8,14.2 L8.5,12.6 L9.6,13.7 Z"/></svg>
<div style="position:absolute;left:1103px;top:189.98px;line-height:20px;font-size:14.5px;white-space:nowrap;">Composer</div>
<div style="position:absolute;left:1104px;top:215px;width:187px;height:26px;background:#fff;border:1px solid #bdbdbd;border-radius:2px"></div>
<div style="position:absolute;left:1111px;top:217.98px;line-height:20px;font-size:14.5px;white-space:nowrap;">Smith/Dickinson</div>
<div style="position:absolute;left:1293px;top:215px;width:24px;height:26px;background:#f4f4f4;border:1px solid #c4c4c4;border-radius:2px"></div>
<svg style="position:absolute;left:1292px;top:214px;overflow:visible" width="26" height="28" viewBox="0 0 26 28"><path fill="none" stroke="#000" stroke-width="2.1" d="M17.1,9.8 V7.2 H7.2 V20.9 H17.1 V18.4"/><rect x="9.9" y="5" width="4.6" height="3.6" rx="0.8" fill="#000"/><path d="M13.6,18 L14.6,15.4 L19.2,10.8 L21,12.6 L16.4,17.2 Z" fill="#000"/></svg>
<div style="position:absolute;left:743px;top:245.98px;line-height:20px;font-size:14.5px;white-space:nowrap;">Bytes</div>
<div style="position:absolute;left:744px;top:271px;width:173px;height:24px;background:#fff;border:1px solid #bdbdbd;border-radius:2px"></div>
<div style="position:absolute;left:751px;top:272.98px;line-height:20px;font-size:14.5px;white-space:nowrap;">5,521,744</div>
<div style="position:absolute;left:923px;top:245.98px;line-height:20px;font-size:14.5px;white-space:nowrap;">Min.</div>
<div style="position:absolute;left:924px;top:271px;width:53px;height:24px;background:#fff;border:1px solid #bdbdbd;border-radius:2px"></div>
<div style="position:absolute;left:931px;top:272.98px;line-height:20px;font-size:14.5px;white-space:nowrap;">3</div>
<div style="position:absolute;left:983px;top:245.98px;line-height:20px;font-size:14.5px;white-space:nowrap;">Sec.</div>
<div style="position:absolute;left:984px;top:271px;width:53px;height:24px;background:#fff;border:1px solid #bdbdbd;border-radius:2px"></div>
<div style="position:absolute;left:991px;top:272.98px;line-height:20px;font-size:14.5px;white-space:nowrap;">49</div>
<div style="position:absolute;left:1043px;top:245.98px;line-height:20px;font-size:14.5px;white-space:nowrap;">Millis.</div>
<div style="position:absolute;left:1044px;top:271px;width:53px;height:24px;background:#fff;border:1px solid #bdbdbd;border-radius:2px"></div>
<div style="position:absolute;left:1051px;top:272.98px;line-height:20px;font-size:14.5px;white-space:nowrap;">982</div>
<div style="position:absolute;left:1103px;top:245.98px;line-height:20px;font-size:14.5px;white-space:nowrap;">Rating</div>
<div style="position:absolute;left:1104px;top:271px;width:64px;height:24px;background:#fff;border:1px solid #bdbdbd;border-radius:2px"></div>
<div style="position:absolute;left:1145px;top:272px;width:1px;height:22px;background:#d0d0d0"></div>
<div style="position:absolute;left:837px;width:300px;text-align:right;top:272.98px;line-height:20px;font-size:14.5px;white-space:nowrap;">5</div>
<svg style="position:absolute;left:1152px;top:276px;overflow:visible" width="10" height="15" viewBox="0 0 10 15"><path fill="#6b6b6b" d="M0,5 L4.5,0 L9,5 Z M0,9 H9 L4.5,14 Z"/></svg>
<div style="position:absolute;left:1175px;top:245.98px;line-height:20px;font-size:14.5px;white-space:nowrap;">Price</div>
<div style="position:absolute;left:1175px;top:271px;width:66px;height:24px;background:#fff;border:1px solid #bdbdbd;border-radius:2px"></div>
<div style="position:absolute;left:1182px;top:272.98px;line-height:20px;font-size:14.5px;white-space:nowrap;">0.99</div>
<div style="position:absolute;left:1247px;top:245.98px;line-height:20px;font-size:14.5px;white-space:nowrap;">Play Count</div>
<div style="position:absolute;left:1248px;top:271px;width:69px;height:24px;background:#fff;border:1px solid #bdbdbd;border-radius:2px"></div>
<div style="position:absolute;left:1255px;top:272.98px;line-height:20px;font-size:14.5px;white-space:nowrap;">163</div>
<div style="position:absolute;left:708px;top:308px;width:830px;height:459px;border:1px solid #c2c2c2;background:#fff"></div>
<div style="position:absolute;left:709px;top:333px;width:828px;height:1px;background:#e6e6e6"></div>
<div style="position:absolute;left:847px;top:309px;width:1px;height:24px;background:#e3e3e3"></div>
<div style="position:absolute;left:950px;top:309px;width:1px;height:24px;background:#e3e3e3"></div>
<div style="position:absolute;left:1137px;top:309px;width:1px;height:24px;background:#e3e3e3"></div>
<div style="position:absolute;left:1251px;top:309px;width:1px;height:24px;background:#e3e3e3"></div>
<div style="position:absolute;left:1345px;top:309px;width:1px;height:24px;background:#e3e3e3"></div>
<div style="position:absolute;left:1441px;top:309px;width:1px;height:24px;background:#e3e3e3"></div>
<div style="position:absolute;left:712.5px;top:311.15px;line-height:20px;font-size:14px;white-space:nowrap;font-weight:bold">Album</div>
<div style="position:absolute;left:851px;top:310.98px;line-height:20px;font-size:14.5px;white-space:nowrap;">Artist</div>
<svg style="position:absolute;left:953px;top:315px;overflow:visible" width="8" height="14" viewBox="0 0 8 14"><line x1="1.5" y1="11.5" x2="5" y2="2.5" stroke="#a0a0a0" stroke-width="1"/></svg>
<div style="position:absolute;left:974.5px;top:310.98px;line-height:20px;font-size:14.5px;white-space:nowrap;">Name</div>
<div style="position:absolute;left:1141.5px;top:310.98px;line-height:20px;font-size:14.5px;white-space:nowrap;">Genre</div>
<div style="position:absolute;left:1255px;top:310.98px;line-height:20px;font-size:14.5px;white-space:nowrap;">Media type</div>
<div style="position:absolute;left:1241.0px;width:300px;text-align:center;top:310.98px;line-height:20px;font-size:14.5px;white-space:nowrap;">Duration</div>
<div style="position:absolute;left:1337.5px;width:300px;text-align:center;top:310.98px;line-height:20px;font-size:14.5px;white-space:nowrap;">Rating</div>
<div style="position:absolute;left:709px;top:334px;width:828px;height:19px;background:#ffffff"></div>
<div style="position:absolute;left:709px;top:334px;width:139px;height:19px;background:#e3e3e3"></div>
<div style="position:absolute;left:709.5px;top:332.98px;line-height:20px;font-size:14.5px;white-space:nowrap;color:#000">Live After Death</div>
<div style="position:absolute;left:848.5px;top:333.15px;line-height:20px;font-size:14px;white-space:nowrap;color:#000">Iron Maiden</div>
<div style="position:absolute;left:951.5px;top:332.98px;line-height:20px;font-size:14.5px;white-space:nowrap;color:#000">2 Minutes To Midnight</div>
<div style="position:absolute;left:1138.5px;top:332.98px;line-height:20px;font-size:14.5px;white-space:nowrap;color:#000">Metal</div>
<div style="position:absolute;left:1252.5px;top:332.98px;line-height:20px;font-size:14.5px;white-space:nowrap;color:#000">MP3</div>
<div style="position:absolute;left:1241.0px;width:300px;text-align:center;top:332.98px;line-height:20px;font-size:14.5px;white-space:nowrap;color:#000">6 min 6 sec</div>
<div style="position:absolute;left:1337.5px;width:300px;text-align:center;top:331.63px;line-height:20px;font-size:15.5px;white-space:nowrap;color:#000">*****</div>
<div style="position:absolute;left:709px;top:353px;width:828px;height:19px;background:#c9c9c9"></div>
<div style="position:absolute;left:709px;top:353px;width:139px;height:19px;background:#b5b5b5"></div>
<div style="position:absolute;left:709.5px;top:351.98px;line-height:20px;font-size:14.5px;white-space:nowrap;color:#000">Live After Death</div>
<div style="position:absolute;left:848.5px;top:352.15px;line-height:20px;font-size:14px;white-space:nowrap;color:#000">Iron Maiden</div>
<div style="position:absolute;left:951.5px;top:351.98px;line-height:20px;font-size:14.5px;white-space:nowrap;color:#000">Acacia Avenue</div>
<div style="position:absolute;left:1138.5px;top:351.98px;line-height:20px;font-size:14.5px;white-space:nowrap;color:#000">Heavy Metal</div>
<div style="position:absolute;left:1252.5px;top:351.98px;line-height:20px;font-size:14.5px;white-space:nowrap;color:#000">MP3</div>
<div style="position:absolute;left:1241.0px;width:300px;text-align:center;top:351.98px;line-height:20px;font-size:14.5px;white-space:nowrap;color:#000">6 min 19 sec</div>
<div style="position:absolute;left:1337.5px;width:300px;text-align:center;top:350.63px;line-height:20px;font-size:15.5px;white-space:nowrap;color:#000">*******</div>
<div style="position:absolute;left:709px;top:372px;width:828px;height:19px;background:#ffffff"></div>
<div style="position:absolute;left:709px;top:372px;width:139px;height:19px;background:#e3e3e3"></div>
<div style="position:absolute;left:709.5px;top:370.98px;line-height:20px;font-size:14.5px;white-space:nowrap;color:#000">Live After Death</div>
<div style="position:absolute;left:848.5px;top:371.15px;line-height:20px;font-size:14px;white-space:nowrap;color:#000">Iron Maiden</div>
<div style="position:absolute;left:951.5px;top:370.98px;line-height:20px;font-size:14.5px;white-space:nowrap;color:#000">Aces High</div>
<div style="position:absolute;left:1138.5px;top:370.98px;line-height:20px;font-size:14.5px;white-space:nowrap;color:#000">Heavy Metal</div>
<div style="position:absolute;left:1252.5px;top:370.98px;line-height:20px;font-size:14.5px;white-space:nowrap;color:#000">MP3</div>
<div style="position:absolute;left:1241.0px;width:300px;text-align:center;top:370.98px;line-height:20px;font-size:14.5px;white-space:nowrap;color:#000">4 min 36 sec</div>
<div style="position:absolute;left:1337.5px;width:300px;text-align:center;top:369.63px;line-height:20px;font-size:15.5px;white-space:nowrap;color:#000">******</div>
<div style="position:absolute;left:709px;top:391px;width:828px;height:19px;background:#c9c9c9"></div>
<div style="position:absolute;left:709px;top:391px;width:139px;height:19px;background:#b5b5b5"></div>
<div style="position:absolute;left:709.5px;top:389.98px;line-height:20px;font-size:14.5px;white-space:nowrap;color:#000">Live After Death</div>
<div style="position:absolute;left:848.5px;top:390.15px;line-height:20px;font-size:14px;white-space:nowrap;color:#000">Iron Maiden</div>
<div style="position:absolute;left:951.5px;top:389.98px;line-height:20px;font-size:14.5px;white-space:nowrap;color:#000">Children Of The Damned</div>
<div style="position:absolute;left:1138.5px;top:389.98px;line-height:20px;font-size:14.5px;white-space:nowrap;color:#000">Heavy Metal</div>
<div style="position:absolute;left:1252.5px;top:389.98px;line-height:20px;font-size:14.5px;white-space:nowrap;color:#000">MP3</div>
<div style="position:absolute;left:1241.0px;width:300px;text-align:center;top:389.98px;line-height:20px;font-size:14.5px;white-space:nowrap;color:#000">4 min 38 sec</div>
<div style="position:absolute;left:1337.5px;width:300px;text-align:center;top:388.63px;line-height:20px;font-size:15.5px;white-space:nowrap;color:#000">**********</div>
<div style="position:absolute;left:709px;top:410px;width:828px;height:19px;background:#ffffff"></div>
<div style="position:absolute;left:709px;top:410px;width:139px;height:19px;background:#e3e3e3"></div>
<div style="position:absolute;left:709.5px;top:408.98px;line-height:20px;font-size:14.5px;white-space:nowrap;color:#000">Live After Death</div>
<div style="position:absolute;left:848.5px;top:409.15px;line-height:20px;font-size:14px;white-space:nowrap;color:#000">Iron Maiden</div>
<div style="position:absolute;left:951.5px;top:408.98px;line-height:20px;font-size:14.5px;white-space:nowrap;color:#000">Die With Your Boots On</div>
<div style="position:absolute;left:1138.5px;top:408.98px;line-height:20px;font-size:14.5px;white-space:nowrap;color:#000">Heavy Metal</div>
<div style="position:absolute;left:1252.5px;top:408.98px;line-height:20px;font-size:14.5px;white-space:nowrap;color:#000">MP3</div>
<div style="position:absolute;left:1241.0px;width:300px;text-align:center;top:408.98px;line-height:20px;font-size:14.5px;white-space:nowrap;color:#000">5 min 14 sec</div>
<div style="position:absolute;left:1337.5px;width:300px;text-align:center;top:407.63px;line-height:20px;font-size:15.5px;white-space:nowrap;color:#000">********</div>
<div style="position:absolute;left:709px;top:429px;width:828px;height:19px;background:#de6d00"></div>
<div style="position:absolute;left:709px;top:429px;width:139px;height:19px;background:#c86200"></div>
<div style="position:absolute;left:709.5px;top:427.98px;line-height:20px;font-size:14.5px;white-space:nowrap;color:#fff">Live After Death</div>
<div style="position:absolute;left:848.5px;top:428.15px;line-height:20px;font-size:14px;white-space:nowrap;color:#fff">Iron Maiden</div>
<div style="position:absolute;left:951.5px;top:427.98px;line-height:20px;font-size:14.5px;white-space:nowrap;color:#fff">Flight Of Icarus</div>
<div style="position:absolute;left:1138.5px;top:427.98px;line-height:20px;font-size:14.5px;white-space:nowrap;color:#fff">Metal</div>
<div style="position:absolute;left:1252.5px;top:427.98px;line-height:20px;font-size:14.5px;white-space:nowrap;color:#fff">MP3</div>
<div style="position:absolute;left:1241.0px;width:300px;text-align:center;top:427.98px;line-height:20px;font-size:14.5px;white-space:nowrap;color:#fff">3 min 49 sec</div>
<div style="position:absolute;left:1337.5px;width:300px;text-align:center;top:426.63px;line-height:20px;font-size:15.5px;white-space:nowrap;color:#fff">*****</div>
<div style="position:absolute;left:709px;top:448px;width:828px;height:19px;background:#ffffff"></div>
<div style="position:absolute;left:709px;top:448px;width:139px;height:19px;background:#e3e3e3"></div>
<div style="position:absolute;left:709.5px;top:446.98px;line-height:20px;font-size:14.5px;white-space:nowrap;color:#000">Live After Death</div>
<div style="position:absolute;left:848.5px;top:447.15px;line-height:20px;font-size:14px;white-space:nowrap;color:#000">Iron Maiden</div>
<div style="position:absolute;left:951.5px;top:446.98px;line-height:20px;font-size:14.5px;white-space:nowrap;color:#000">Hallowed Be Thy Name</div>
<div style="position:absolute;left:1138.5px;top:446.98px;line-height:20px;font-size:14.5px;white-space:nowrap;color:#000">Metal</div>
<div style="position:absolute;left:1252.5px;top:446.98px;line-height:20px;font-size:14.5px;white-space:nowrap;color:#000">MP3</div>
<div style="position:absolute;left:1241.0px;width:300px;text-align:center;top:446.98px;line-height:20px;font-size:14.5px;white-space:nowrap;color:#000">7 min 31 sec</div>
<div style="position:absolute;left:1337.5px;width:300px;text-align:center;top:445.63px;line-height:20px;font-size:15.5px;white-space:nowrap;color:#000">*******</div>
<div style="position:absolute;left:709px;top:467px;width:828px;height:19px;background:#c9c9c9"></div>
<div style="position:absolute;left:709px;top:467px;width:139px;height:19px;background:#b5b5b5"></div>
<div style="position:absolute;left:709.5px;top:465.98px;line-height:20px;font-size:14.5px;white-space:nowrap;color:#000">Live After Death</div>
<div style="position:absolute;left:848.5px;top:466.15px;line-height:20px;font-size:14px;white-space:nowrap;color:#000">Iron Maiden</div>
<div style="position:absolute;left:951.5px;top:465.98px;line-height:20px;font-size:14.5px;white-space:nowrap;color:#000">Intro- Churchill S Speech</div>
<div style="position:absolute;left:1138.5px;top:465.98px;line-height:20px;font-size:14.5px;white-space:nowrap;color:#000">Heavy Metal</div>
<div style="position:absolute;left:1252.5px;top:465.98px;line-height:20px;font-size:14.5px;white-space:nowrap;color:#000">MP3</div>
<div style="position:absolute;left:1241.0px;width:300px;text-align:center;top:465.98px;line-height:20px;font-size:14.5px;white-space:nowrap;color:#000">0 min 48 sec</div>
<div style="position:absolute;left:1337.5px;width:300px;text-align:center;top:464.63px;line-height:20px;font-size:15.5px;white-space:nowrap;color:#000">******</div>
<div style="position:absolute;left:709px;top:486px;width:828px;height:19px;background:#ffffff"></div>
<div style="position:absolute;left:709px;top:486px;width:139px;height:19px;background:#e3e3e3"></div>
<div style="position:absolute;left:709.5px;top:484.98px;line-height:20px;font-size:14.5px;white-space:nowrap;color:#000">Live After Death</div>
<div style="position:absolute;left:848.5px;top:485.15px;line-height:20px;font-size:14px;white-space:nowrap;color:#000">Iron Maiden</div>
<div style="position:absolute;left:951.5px;top:484.98px;line-height:20px;font-size:14.5px;white-space:nowrap;color:#000">Iron Maiden</div>
<div style="position:absolute;left:1138.5px;top:484.98px;line-height:20px;font-size:14.5px;white-space:nowrap;color:#000">Metal</div>
<div style="position:absolute;left:1252.5px;top:484.98px;line-height:20px;font-size:14.5px;white-space:nowrap;color:#000">MP3</div>
<div style="position:absolute;left:1241.0px;width:300px;text-align:center;top:484.98px;line-height:20px;font-size:14.5px;white-space:nowrap;color:#000">4 min 21 sec</div>
<div style="position:absolute;left:1337.5px;width:300px;text-align:center;top:483.63px;line-height:20px;font-size:15.5px;white-space:nowrap;color:#000">********</div>
<div style="position:absolute;left:709px;top:505px;width:828px;height:19px;background:#c9c9c9"></div>
<div style="position:absolute;left:709px;top:505px;width:139px;height:19px;background:#b5b5b5"></div>
<div style="position:absolute;left:709.5px;top:503.98px;line-height:20px;font-size:14.5px;white-space:nowrap;color:#000">Live After Death</div>
<div style="position:absolute;left:848.5px;top:504.15px;line-height:20px;font-size:14px;white-space:nowrap;color:#000">Iron Maiden</div>
<div style="position:absolute;left:951.5px;top:503.98px;line-height:20px;font-size:14.5px;white-space:nowrap;color:#000">Phantom Of The Opera</div>
<div style="position:absolute;left:1138.5px;top:503.98px;line-height:20px;font-size:14.5px;white-space:nowrap;color:#000">Heavy Metal</div>
<div style="position:absolute;left:1252.5px;top:503.98px;line-height:20px;font-size:14.5px;white-space:nowrap;color:#000">MP3</div>
<div style="position:absolute;left:1241.0px;width:300px;text-align:center;top:503.98px;line-height:20px;font-size:14.5px;white-space:nowrap;color:#000">7 min 21 sec</div>
<div style="position:absolute;left:1337.5px;width:300px;text-align:center;top:502.63px;line-height:20px;font-size:15.5px;white-space:nowrap;color:#000">****</div>
<div style="position:absolute;left:709px;top:524px;width:828px;height:19px;background:#ffffff"></div>
<div style="position:absolute;left:709px;top:524px;width:139px;height:19px;background:#e3e3e3"></div>
<div style="position:absolute;left:709.5px;top:522.98px;line-height:20px;font-size:14.5px;white-space:nowrap;color:#000">Live After Death</div>
<div style="position:absolute;left:848.5px;top:523.15px;line-height:20px;font-size:14px;white-space:nowrap;color:#000">Iron Maiden</div>
<div style="position:absolute;left:951.5px;top:522.98px;line-height:20px;font-size:14.5px;white-space:nowrap;color:#000">Powerslave</div>
<div style="position:absolute;left:1138.5px;top:522.98px;line-height:20px;font-size:14.5px;white-space:nowrap;color:#000">Metal</div>
<div style="position:absolute;left:1252.5px;top:522.98px;line-height:20px;font-size:14.5px;white-space:nowrap;color:#000">MP3</div>
<div style="position:absolute;left:1241.0px;width:300px;text-align:center;top:522.98px;line-height:20px;font-size:14.5px;white-space:nowrap;color:#000">7 min 34 sec</div>
<div style="position:absolute;left:1337.5px;width:300px;text-align:center;top:521.63px;line-height:20px;font-size:15.5px;white-space:nowrap;color:#000">*****</div>
<div style="position:absolute;left:709px;top:543px;width:828px;height:19px;background:#c9c9c9"></div>
<div style="position:absolute;left:709px;top:543px;width:139px;height:19px;background:#b5b5b5"></div>
<div style="position:absolute;left:709.5px;top:541.98px;line-height:20px;font-size:14.5px;white-space:nowrap;color:#000">Live After Death</div>
<div style="position:absolute;left:848.5px;top:542.15px;line-height:20px;font-size:14px;white-space:nowrap;color:#000">Iron Maiden</div>
<div style="position:absolute;left:951.5px;top:541.98px;line-height:20px;font-size:14.5px;white-space:nowrap;color:#000">Revelations</div>
<div style="position:absolute;left:1138.5px;top:541.98px;line-height:20px;font-size:14.5px;white-space:nowrap;color:#000">Metal</div>
<div style="position:absolute;left:1252.5px;top:541.98px;line-height:20px;font-size:14.5px;white-space:nowrap;color:#000">MP3</div>
<div style="position:absolute;left:1241.0px;width:300px;text-align:center;top:541.98px;line-height:20px;font-size:14.5px;white-space:nowrap;color:#000">6 min 11 sec</div>
<div style="position:absolute;left:1337.5px;width:300px;text-align:center;top:540.63px;line-height:20px;font-size:15.5px;white-space:nowrap;color:#000">********</div>
<div style="position:absolute;left:709px;top:562px;width:828px;height:19px;background:#ffffff"></div>
<div style="position:absolute;left:709px;top:562px;width:139px;height:19px;background:#e3e3e3"></div>
<div style="position:absolute;left:709.5px;top:560.98px;line-height:20px;font-size:14.5px;white-space:nowrap;color:#000">Live After Death</div>
<div style="position:absolute;left:848.5px;top:561.15px;line-height:20px;font-size:14px;white-space:nowrap;color:#000">Iron Maiden</div>
<div style="position:absolute;left:951.5px;top:560.98px;line-height:20px;font-size:14.5px;white-space:nowrap;color:#000">Rime Of The Ancient Mari...</div>
<div style="position:absolute;left:1138.5px;top:560.98px;line-height:20px;font-size:14.5px;white-space:nowrap;color:#000">Metal</div>
<div style="position:absolute;left:1252.5px;top:560.98px;line-height:20px;font-size:14.5px;white-space:nowrap;color:#000">MP3</div>
<div style="position:absolute;left:1241.0px;width:300px;text-align:center;top:560.98px;line-height:20px;font-size:14.5px;white-space:nowrap;color:#000">13 min 9 sec</div>
<div style="position:absolute;left:1337.5px;width:300px;text-align:center;top:559.63px;line-height:20px;font-size:15.5px;white-space:nowrap;color:#000">*****</div>
<div style="position:absolute;left:709px;top:581px;width:828px;height:19px;background:#c9c9c9"></div>
<div style="position:absolute;left:709px;top:581px;width:139px;height:19px;background:#b5b5b5"></div>
<div style="position:absolute;left:709.5px;top:579.98px;line-height:20px;font-size:14.5px;white-space:nowrap;color:#000">Live After Death</div>
<div style="position:absolute;left:848.5px;top:580.15px;line-height:20px;font-size:14px;white-space:nowrap;color:#000">Iron Maiden</div>
<div style="position:absolute;left:951.5px;top:579.98px;line-height:20px;font-size:14.5px;white-space:nowrap;color:#000">Run To The Hills</div>
<div style="position:absolute;left:1138.5px;top:579.98px;line-height:20px;font-size:14.5px;white-space:nowrap;color:#000">Metal</div>
<div style="position:absolute;left:1252.5px;top:579.98px;line-height:20px;font-size:14.5px;white-space:nowrap;color:#000">MP3</div>
<div style="position:absolute;left:1241.0px;width:300px;text-align:center;top:579.98px;line-height:20px;font-size:14.5px;white-space:nowrap;color:#000">3 min 51 sec</div>
<div style="position:absolute;left:1337.5px;width:300px;text-align:center;top:578.63px;line-height:20px;font-size:15.5px;white-space:nowrap;color:#000">**</div>
<div style="position:absolute;left:709px;top:600px;width:828px;height:19px;background:#ffffff"></div>
<div style="position:absolute;left:709px;top:600px;width:139px;height:19px;background:#e3e3e3"></div>
<div style="position:absolute;left:709.5px;top:598.98px;line-height:20px;font-size:14.5px;white-space:nowrap;color:#000">Live After Death</div>
<div style="position:absolute;left:848.5px;top:599.15px;line-height:20px;font-size:14px;white-space:nowrap;color:#000">Iron Maiden</div>
<div style="position:absolute;left:951.5px;top:598.98px;line-height:20px;font-size:14.5px;white-space:nowrap;color:#000">Running Free</div>
<div style="position:absolute;left:1138.5px;top:598.98px;line-height:20px;font-size:14.5px;white-space:nowrap;color:#000">Metal</div>
<div style="position:absolute;left:1252.5px;top:598.98px;line-height:20px;font-size:14.5px;white-space:nowrap;color:#000">MP3</div>
<div style="position:absolute;left:1241.0px;width:300px;text-align:center;top:598.98px;line-height:20px;font-size:14.5px;white-space:nowrap;color:#000">3 min 24 sec</div>
<div style="position:absolute;left:1337.5px;width:300px;text-align:center;top:597.63px;line-height:20px;font-size:15.5px;white-space:nowrap;color:#000">*******</div>
<div style="position:absolute;left:709px;top:619px;width:828px;height:19px;background:#c9c9c9"></div>
<div style="position:absolute;left:709px;top:619px;width:139px;height:19px;background:#b5b5b5"></div>
<div style="position:absolute;left:709.5px;top:617.98px;line-height:20px;font-size:14.5px;white-space:nowrap;color:#000">Live After Death</div>
<div style="position:absolute;left:848.5px;top:618.15px;line-height:20px;font-size:14px;white-space:nowrap;color:#000">Iron Maiden</div>
<div style="position:absolute;left:951.5px;top:617.98px;line-height:20px;font-size:14.5px;white-space:nowrap;color:#000">The Number Of The Beast</div>
<div style="position:absolute;left:1138.5px;top:617.98px;line-height:20px;font-size:14.5px;white-space:nowrap;color:#000">Metal</div>
<div style="position:absolute;left:1252.5px;top:617.98px;line-height:20px;font-size:14.5px;white-space:nowrap;color:#000">MP3</div>
<div style="position:absolute;left:1241.0px;width:300px;text-align:center;top:617.98px;line-height:20px;font-size:14.5px;white-space:nowrap;color:#000">4 min 35 sec</div>
<div style="position:absolute;left:1337.5px;width:300px;text-align:center;top:616.63px;line-height:20px;font-size:15.5px;white-space:nowrap;color:#000">*********</div>
<div style="position:absolute;left:709px;top:638px;width:828px;height:19px;background:#ffffff"></div>
<div style="position:absolute;left:709px;top:638px;width:139px;height:19px;background:#e3e3e3"></div>
<div style="position:absolute;left:709.5px;top:636.98px;line-height:20px;font-size:14.5px;white-space:nowrap;color:#000">Live After Death</div>
<div style="position:absolute;left:848.5px;top:637.15px;line-height:20px;font-size:14px;white-space:nowrap;color:#000">Iron Maiden</div>
<div style="position:absolute;left:951.5px;top:636.98px;line-height:20px;font-size:14.5px;white-space:nowrap;color:#000">The Trooper</div>
<div style="position:absolute;left:1138.5px;top:636.98px;line-height:20px;font-size:14.5px;white-space:nowrap;color:#000">Metal</div>
<div style="position:absolute;left:1252.5px;top:636.98px;line-height:20px;font-size:14.5px;white-space:nowrap;color:#000">MP3</div>
<div style="position:absolute;left:1241.0px;width:300px;text-align:center;top:636.98px;line-height:20px;font-size:14.5px;white-space:nowrap;color:#000">4 min 28 sec</div>
<div style="position:absolute;left:1337.5px;width:300px;text-align:center;top:635.63px;line-height:20px;font-size:15.5px;white-space:nowrap;color:#000">*********</div>
<div style="position:absolute;left:709px;top:657px;width:828px;height:19px;background:#c9c9c9"></div>
<div style="position:absolute;left:709px;top:657px;width:139px;height:19px;background:#b5b5b5"></div>
<div style="position:absolute;left:709.5px;top:655.98px;line-height:20px;font-size:14.5px;white-space:nowrap;color:#000">Live After Death</div>
<div style="position:absolute;left:848.5px;top:656.15px;line-height:20px;font-size:14px;white-space:nowrap;color:#000">Iron Maiden</div>
<div style="position:absolute;left:951.5px;top:655.98px;line-height:20px;font-size:14.5px;white-space:nowrap;color:#000">Wrathchild</div>
<div style="position:absolute;left:1138.5px;top:655.98px;line-height:20px;font-size:14.5px;white-space:nowrap;color:#000">Heavy Metal</div>
<div style="position:absolute;left:1252.5px;top:655.98px;line-height:20px;font-size:14.5px;white-space:nowrap;color:#000">MP3</div>
<div style="position:absolute;left:1241.0px;width:300px;text-align:center;top:655.98px;line-height:20px;font-size:14.5px;white-space:nowrap;color:#000">3 min 3 sec</div>
<div style="position:absolute;left:1337.5px;width:300px;text-align:center;top:654.63px;line-height:20px;font-size:15.5px;white-space:nowrap;color:#000">*******</div>
<div style="position:absolute;left:708px;top:772px;width:98px;height:26px;background:#fff;border:1px solid #c4c4c4;border-radius:0px"></div>
<div style="position:absolute;left:715px;top:774.98px;line-height:20px;font-size:14.5px;white-space:nowrap;color:#a8a8a8">Find...</div>
<div style="position:absolute;left:808px;top:778.5px;width:3px;height:3px;background:#b4b4b4;border-radius:50%"></div>
<div style="position:absolute;left:808px;top:783.5px;width:3px;height:3px;background:#b4b4b4;border-radius:50%"></div>
<div style="position:absolute;left:808px;top:788.5px;width:3px;height:3px;background:#b4b4b4;border-radius:50%"></div>
<div style="position:absolute;left:1034px;top:774.98px;line-height:20px;font-size:14.5px;white-space:nowrap;">18 (1 selected)</div>
<svg style="position:absolute;left:1363px;top:777px;overflow:visible" width="11" height="15" viewBox="0 0 11 15"><path fill="none" stroke="#000" stroke-width="2.6" stroke-linejoin="miter" stroke-linecap="round" d="M10.2,1.5 H2.3 L6.5,7.5 L2.3,13.5 H10.2"/></svg>
<svg style="position:absolute;left:1387px;top:776px;overflow:visible" width="16" height="16" viewBox="0 0 16 16"><circle cx="9.6" cy="6.6" r="5.2" fill="none" stroke="#000" stroke-width="2.7"/><line x1="5.4" y1="10.8" x2="1.9" y2="14.3" stroke="#000" stroke-width="3" stroke-linecap="round"/></svg>
<svg style="position:absolute;left:1413px;top:777px;overflow:visible" width="17" height="14" viewBox="0 0 17 14"><path fill="#000" d="M0.3,0.8 Q0.3,0 1.1,0 H15.9 Q16.7,0 16.7,0.8 L10.1,7.6 V13 Q10.1,14 9.1,14 Q7,13.6 7,12.5 V7.6 Z"/></svg>
<div style="position:absolute;left:1438px;top:772px;width:1px;height:27px;background:#9aa3ad"></div>
<svg style="position:absolute;left:1449px;top:777px;overflow:visible" width="13" height="15" viewBox="0 0 13 15"><rect x="0" y="1.2" width="13" height="2.6" rx="0.8" fill="#000"/><rect x="4.2" y="0" width="4.6" height="2" rx="1" fill="#000"/><path fill="#000" d="M0.8,4.6 H12.2 L12,14.4 Q12,15 11.4,15 H1.6 Q1,15 1,14.4 Z"/></svg>
<div style="position:absolute;left:1472px;top:772px;width:1px;height:27px;background:#9aa3ad"></div>
<svg style="position:absolute;left:1481px;top:775px;overflow:visible" width="17" height="18" viewBox="0 0 17 18"><path fill="#000" d="M0,5.5 L5.5,0 H12.5 V4.5 H10.5 V2 H6.5 V6.5 H2 V16 H10.5 V15 H12.5 V18 H0 Z"/><path fill="#000" d="M6.5,15.5 L7.5,11.5 L14.5,4.5 L17,7 L10,14 Z"/><path fill="#f4f4f4" d="M8,14.2 L8.5,12.6 L9.6,13.7 Z"/></svg>
<div style="position:absolute;left:1506px;top:772px;width:1px;height:27px;background:#9aa3ad"></div>
<svg style="position:absolute;left:1517px;top:778px;overflow:visible" width="14" height="13" viewBox="0 0 14 13"><rect x="0" y="0" width="3" height="3" fill="#000"/><rect x="5" y="0" width="9" height="3" fill="#000"/><rect x="0" y="5" width="3" height="3" fill="#000"/><rect x="5" y="5" width="9" height="3" fill="#000"/><rect x="0" y="10" width="3" height="3" fill="#000"/><rect x="5" y="10" width="9" height="3" fill="#000"/></svg>
<div style="position:absolute;left:700.5px;top:446.5px;width:3px;height:3px;background:#b8b8b8;border-radius:50%"></div>
<div style="position:absolute;left:700.5px;top:452.0px;width:3px;height:3px;background:#b8b8b8;border-radius:50%"></div>
<div style="position:absolute;left:700.5px;top:457.5px;width:3px;height:3px;background:#b8b8b8;border-radius:50%"></div>
</body></html>
